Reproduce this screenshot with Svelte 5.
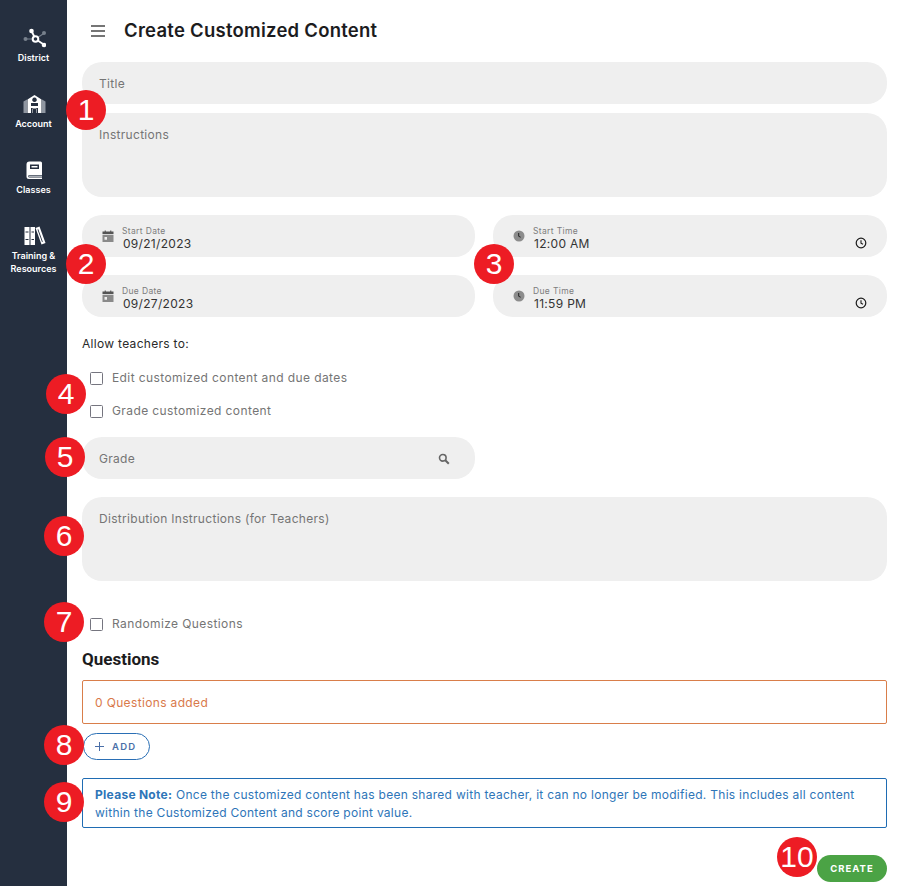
<script>
const navItems = [
  { id: "district", label: ["District"] },
  { id: "account", label: ["Account"] },
  { id: "classes", label: ["Classes"] },
  { id: "training", label: ["Training &", "Resources"] }
];

const dateRows = [
  [
    { icon: "cal", label: "Start Date", value: "09/21/2023" },
    { icon: "clock", label: "Start Time", value: "12:00 AM" }
  ],
  [
    { icon: "cal", label: "Due Date", value: "09/27/2023" },
    { icon: "clock", label: "Due Time", value: "11:59 PM" }
  ]
];

// numbered callouts that lie over the form
const badges = [
  { n: 1, x: 86, y: 110 },
  { n: 2, x: 86, y: 264 },
  { n: 3, x: 494, y: 264 },
  { n: 4, x: 66, y: 394 },
  { n: 5, x: 65, y: 457 },
  { n: 6, x: 64, y: 536 },
  { n: 7, x: 64, y: 622 },
  { n: 8, x: 64, y: 745 },
  { n: 9, x: 64, y: 802 },
  { n: 10, x: 797, y: 857 }
];
</script>

<div class="page">
  <nav class="sidebar">
    {#each navItems as item}
      <div class="nav_item">
        <svg class="nav_icon" viewBox="0 0 24 20" width="24" height="20" fill="#fff">
          {#if item.id == "district"}
            <path d="M3.500 11h10M13.500 11l9-6" stroke="#77808c" stroke-width="1.100" />
            <circle cx="3.500" cy="11" r="2" fill="#77808c" />
            <circle cx="22" cy="5" r="2" fill="#77808c" />
            <path d="M9.500 3l4 8M13.500 11l9 6" stroke="#fff" stroke-width="1.800" />
            <circle cx="9.500" cy="3" r="2.300" />
            <circle cx="22" cy="17" r="2.300" />
            <circle cx="13.500" cy="11" r="2.800" fill="#252f3f" stroke="#fff" stroke-width="2" />
          {:else if item.id == "account"}
            <path d="M1.500 7.500l3.500-2V19H1.500zM23.500 7.500l-3.500-2V19h3.500z" fill="#8f96a1" />
            <path fill-rule="evenodd" d="M12.500 1l7 4.500V19h-3.500v-5H9v5H5.500V5.500zM12.500 3.500a2.300 2.300 0 1 0 .01 0zM9 9v3h7V9z" />
            <path d="M10.500 14.500h4V19h-4z" />
            <path d="M11 15h3v4h-3z" fill="#252f3f" />
          {:else if item.id == "classes"}
            <path fill-rule="evenodd" d="M7.500 1.500h11a1.500 1.500 0 0 1 1.500 1.500v12H7.500a1 1 0 0 0 0 2.500H20V19H7A2.500 2.500 0 0 1 4.500 16.500V4.500a3 3 0 0 1 3-3zM8 4.500V9h9V4.500zM9.500 6h6v1.500h-6z" />
            <path d="M7 15.500h13v1.500H7z" fill="#a9aeb6" />
          {:else}
            <path fill-rule="evenodd" d="M2.500 1h5v18h-5zM3.500 5.500v1h3v-1zM3.500 13v1h3v-1z" />
            <path fill-rule="evenodd" d="M8.500 1H13v18H8.500zM9.500 5.500v1H12v-1zM9.500 13v1H12v-1z" />
            <path fill-rule="evenodd" d="M13.500 2l4-1.500 6 16.500-4 1.500zM15.500 3.500l4.500 12.500.8-.3-4.500-12.500z" />
          {/if}
        </svg>
        <div class="nav_label">
          {#each item.label as line}
            <div>{line}</div>
          {/each}
        </div>
      </div>
    {/each}
  </nav>

  <main class="content">
    <header class="top">
      <svg class="menu" viewBox="0 0 14 12" width="14" height="12">
        <path d="M0 1h14M0 6h14M0 11h14" stroke="#757575" stroke-width="2.200" />
      </svg>
      <h1>Create Customized Content</h1>
    </header>

    <div class="field field_title">Title</div>
    <div class="field field_area field_instructions">Instructions</div>

    <div class="dates">
      {#each dateRows as row}
        <div class="date_row">
          {#each row as cell}
            <div class="field date_field">
              {#if cell.icon == "cal"}
                <svg class="lead_icon" viewBox="0 0 12 12" width="12" height="12">
                  <path fill="#555" d="M.500 1.500h2.200V.500h1.100v1h4.400v-1h1.100v1h2.200V4H.500z" />
                  <path fill="#8a8a8a" fill-rule="evenodd" d="M.500 4.800h11V12H.500zM2.500 7v2.700H5V7z" />
                </svg>
              {:else}
                <svg class="lead_icon" viewBox="0 0 12 12" width="12" height="12">
                  <circle cx="6" cy="6" r="5.500" fill="#8c8c8c" />
                  <path d="M5.700 3v3.300l2 .9" fill="none" stroke="#222" stroke-width="1" />
                </svg>
              {/if}
              <div class="date_text">
                <div class="date_label">{cell.label}</div>
                <div class="date_value">{cell.value}</div>
              </div>
              {#if cell.icon == "clock"}
                <svg class="end_icon" viewBox="0 0 12 12" width="12" height="12">
                  <circle cx="6" cy="6" r="4.800" fill="none" stroke="#1a1a1a" stroke-width="1.200" />
                  <path d="M6 3.200v3l2 1.100" fill="none" stroke="#1a1a1a" stroke-width="1.100" />
                </svg>
              {/if}
            </div>
          {/each}
        </div>
      {/each}
    </div>

    <p class="allow">Allow teachers to:</p>

    <label class="check check_first"><span class="box"></span>Edit customized content and due dates</label>
    <label class="check check_second"><span class="box"></span>Grade customized content</label>

    <div class="field field_grade">
      <span>Grade</span>
      <svg viewBox="0 0 12 12" width="12" height="12">
        <circle cx="4.800" cy="4.800" r="3.300" fill="none" stroke="#666" stroke-width="1.600" />
        <path d="M7.300 7.300l3.500 3.500" stroke="#666" stroke-width="2" />
      </svg>
    </div>

    <div class="field field_area field_distribution">Distribution Instructions (for Teachers)</div>

    <label class="check check_random"><span class="box"></span>Randomize Questions</label>

    <h2>Questions</h2>
    <div class="questions_box">0 Questions added</div>

    <button class="add">
      <svg viewBox="0 0 9 9" width="9" height="9">
        <path d="M4.500 0v9M0 4.500h9" stroke="#4a6fa8" stroke-width="1" />
      </svg>
      ADD
    </button>

    <div class="note">
      <strong>Please Note:</strong> Once the customized content has been shared with teacher, it can no longer be modified. This includes all content within the Customized Content and score point value.
    </div>

    <div class="actions">
      <button class="create">CREATE</button>
    </div>
  </main>

  {#each badges as b}
    <div class="badge" style="left: {b.x - 20}px; top: {b.y - 20}px">{b.n}</div>
  {/each}
</div>

<style>
  :global(body) {
    margin: 0;
    background: #fff;
  }

  .page {
    position: relative;
    display: flex;
    width: 901px;
    height: 886px;
    overflow: hidden;
    font-family: Inter, "Open Sans", sans-serif;
    color: #666;
  }

  .sidebar {
    flex: 0 0 67px;
    background: #252f3f;
    color: #fff;
    padding-top: 28px;
    box-sizing: border-box;
  }

  .nav_item {
    display: flex;
    flex-direction: column;
    align-items: center;
    height: 66px;
  }

  .nav_icon {
    display: block;
  }

  .nav_label {
    margin-top: 3px;
    font-size: 9px;
    line-height: 13px;
    font-weight: 600;
    text-align: center;
    white-space: nowrap;
  }

  .content {
    flex: 1;
    padding: 0 14px 0 15px;
    min-width: 0;
  }

  .top {
    display: flex;
    align-items: flex-start;
    height: 62px;
  }

  .menu {
    margin: 25px 0 0 9px;
  }

  h1 {
    margin: 19px 0 0 19px;
    font-size: 18.500px;
    line-height: 23px;
    font-weight: 600;
    letter-spacing: 0.250px;
    color: #1c1c1e;
  }

  .field {
    background: #efefef;
    border-radius: 20px;
    box-sizing: border-box;
    font-size: 12px;
    letter-spacing: 0.300px;
    color: #757575;
  }

  .field_title {
    height: 42px;
    padding: 15px 17px 0;
    line-height: 14px;
  }

  .field_area {
    height: 84px;
    padding: 15px 17px 0;
    line-height: 14px;
  }

  .field_instructions {
    margin-top: 9px;
  }

  .dates {
    margin-top: 18px;
    display: flex;
    flex-direction: column;
    gap: 18px;
  }

  .date_row {
    display: grid;
    grid-template-columns: 393px 394px;
    gap: 18px;
  }

  .date_field {
    position: relative;
    height: 42px;
    display: flex;
    align-items: flex-start;
    padding: 11px 20px 0 20px;
  }

  .lead_icon {
    margin-top: 4px;
    flex: none;
  }

  .date_text {
    margin-left: 8px;
    flex: 1;
  }

  .date_label {
    font-size: 8.500px;
    line-height: 10px;
    letter-spacing: 0.350px;
    color: #7d7d7d;
  }

  .date_value {
    font-size: 12px;
    line-height: 15px;
    color: #333;
    letter-spacing: 0.300px;
    margin-left: 1px;
  }

  .end_icon {
    margin-top: 11px;
    flex: none;
  }

  .allow {
    margin: 19px 0 0;
    font-size: 12px;
    line-height: 15px;
    letter-spacing: 0.300px;
    color: #2a2a2a;
  }

  .check {
    display: flex;
    align-items: center;
    font-size: 12px;
    line-height: 14px;
    letter-spacing: 0.400px;
    color: #757575;
    margin-left: 8px;
  }

  .check_first {
    margin-top: 20px;
  }

  .check_second {
    margin-top: 19px;
  }

  .box {
    width: 11px;
    height: 11px;
    border: 1.500px solid #75757f;
    border-radius: 1.500px;
    margin-right: 9px;
    flex: none;
  }

  .field_grade {
    margin-top: 19px;
    width: 393px;
    height: 42px;
    display: flex;
    align-items: center;
    justify-content: space-between;
    padding: 1px 25px 0 17px;
  }

  .field_distribution {
    margin-top: 18px;
  }

  .check_random {
    margin-top: 36px;
  }

  h2 {
    margin: 18px 0 0;
    font-family: Roboto, sans-serif;
    font-size: 17px;
    line-height: 20px;
    font-weight: 700;
    color: #1c1c1e;
  }

  .questions_box {
    margin-top: 11px;
    height: 44px;
    box-sizing: border-box;
    border: 1px solid #d97e4a;
    border-radius: 2px;
    padding: 0 12px;
    display: flex;
    align-items: center;
    font-size: 12px;
    letter-spacing: 0.350px;
    color: #d9794a;
  }

  .add {
    display: flex;
    align-items: center;
    gap: 8px;
    margin: 9px 0 0 1px;
    width: 67px;
    height: 27px;
    padding: 0 0 0 11px;
    border: 1px solid #2a6fb5;
    border-radius: 14px;
    background: #fff;
    color: #4a6fa8;
    font-family: Inter, sans-serif;
    font-size: 9.500px;
    font-weight: 600;
    letter-spacing: 1.300px;
    box-sizing: border-box;
  }

  .note {
    margin-top: 18px;
    height: 50px;
    box-sizing: border-box;
    border: 1px solid #1f6cb3;
    border-radius: 2px;
    padding: 7px 12px 0;
    font-size: 12px;
    line-height: 18px;
    letter-spacing: 0.280px;
    color: #2e75b8;
  }

  .note strong {
    font-weight: 700;
  }

  .actions {
    display: flex;
    justify-content: flex-end;
    margin-top: 27px;
  }

  .create {
    width: 70px;
    height: 27px;
    border: none;
    border-radius: 14px;
    background: #4ba345;
    color: #fff;
    font-family: Inter, sans-serif;
    font-size: 9.500px;
    font-weight: 700;
    letter-spacing: 1px;
    padding: 0;
  }

  .badge {
    position: absolute;
    width: 40px;
    height: 40px;
    border-radius: 50%;
    background: #ed1c24;
    color: #fff;
    font-family: "Liberation Sans", Arial, sans-serif;
    font-size: 30px;
    line-height: 40px;
    text-align: center;
  }
</style>
